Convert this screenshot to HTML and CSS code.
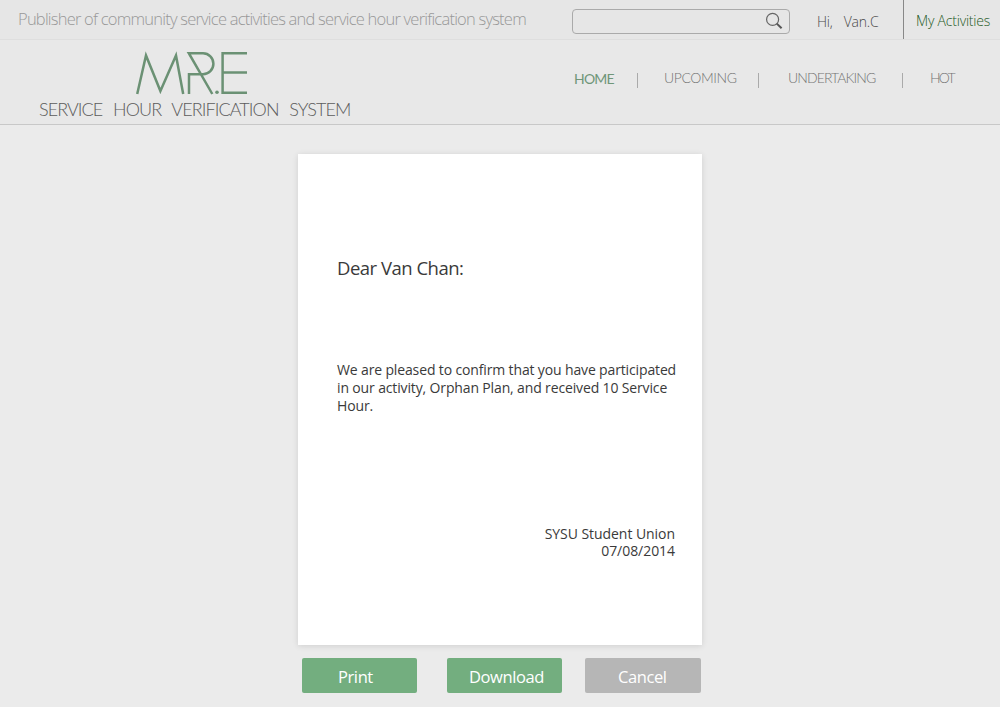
FILE: index.html
```html
<!DOCTYPE html>
<html lang="en">
<head>
  <meta charset="UTF-8">
  <title>MR.E - Service Hour Verification System</title>
  <link rel="stylesheet" href="styles.css">
</head>
<body>

  <!-- Top bar -->
  <div class="topbar">
    <div class="slogan">Publisher of community service activities and service hour verification system</div>
    <div class="search">
      <svg class="search-icon" width="18" height="18" viewBox="0 0 18 18">
        <circle cx="7.6" cy="7.4" r="6" fill="none" stroke="#666" stroke-width="1.2"/>
        <path d="M11.8 11.6L16.6 16.2" stroke="#555" stroke-width="2"/>
      </svg>
    </div>
    <div class="user"><span>Hi,</span><span>Van.C</span></div>
    <a class="my-activities">My Activities</a>
  </div>

  <!-- Logo and navigation -->
  <div class="header">
    <div class="brand">
      <svg class="logo" width="112" height="44" viewBox="136 51 112 44">
        <g fill="none" stroke="#6b9174" stroke-width="2.5">
          <path d="M137.2 94L146 55.5L160.4 91L176 55.5L183.2 94"/>
          <path d="M189 94V74.2H203A10.4 10.5 0 0 0 203 53.2H188.8L212.3 94"/>
          <path d="M247 53.2H222.6V92.8H247M222.6 72.6H247"/>
        </g>
        <circle cx="217" cy="92.2" r="1.8" fill="#6b9174"/>
      </svg>
      <div class="tagline">SERVICE HOUR VERIFICATION SYSTEM</div>
    </div>
    <div class="nav">
      <a class="nav-home">HOME</a>
      <i></i>
      <a class="nav-upcoming">UPCOMING</a>
      <i></i>
      <a class="nav-undertaking">UNDERTAKING</a>
      <i></i>
      <a class="nav-hot">HOT</a>
    </div>
  </div>

  <!-- Certificate -->
  <div class="letter">
    <div class="greeting">Dear Van Chan:</div>
    <div class="message">
      We are pleased to confirm that you have participated<br>
      in our activity, Orphan Plan, and received 10 Service<br>
      Hour.
    </div>
    <div class="signature">
      <div>SYSU Student Union</div>
      <div class="date">07/08/2014</div>
    </div>
  </div>

  <div class="buttons">
    <a class="btn print">Print</a>
    <a class="btn download">Download</a>
    <a class="btn cancel">Cancel</a>
  </div>

</body>
</html>
```
FILE: styles.css
```css
* {
  box-sizing: border-box;
}

body {
  margin: 0;
  height: 707px;
  overflow: hidden;
  background-color: #ebebeb;
  color: #3a3a3a;
  font-family: "Open Sans", "Noto Sans", sans-serif;
  white-space: nowrap;
}

/* Top bar */
.topbar {
  display: flex;
  height: 40px;
  background-color: #e6e6e6;
  border-bottom: 1px solid #dedede;
}

.slogan {
  width: 572px;
  padding-left: 18px;
  color: #989898;
  font-size: 16.5px;
  font-weight: 300;
  line-height: 37px;
  letter-spacing: -0.775px;
}

.search {
  display: flex;
  justify-content: flex-end;
  width: 218px;
  height: 25px;
  margin-top: 9px;
  padding: 2px 6px 0 0;
  border: 1px solid #aaa;
  border-radius: 4px;
}

.user {
  display: flex;
  gap: 11px;
  width: 113px;
  padding-left: 27px;
  color: #4a4a4a;
  font-size: 14px;
  font-weight: 300;
  line-height: 43px;
  letter-spacing: -0.2px;
}

.my-activities {
  padding-left: 12px;
  border-left: 1px solid #888;
  color: #1f5a1f;
  font-size: 14px;
  font-weight: 300;
  line-height: 41px;
  letter-spacing: -0.2px;
}

/* Logo and navigation */
.header {
  display: flex;
  height: 85px;
  background-color: #e8e8e8;
  border-bottom: 1px solid #c8c8c8;
}

.brand {
  width: 574px;
  padding: 11px 0 0 39px;
}

.logo {
  display: block;
  margin-left: 97px;
}

.tagline {
  color: #5c5c5c;
  font-family: Lato, sans-serif;
  font-size: 18px;
  font-weight: 300;
  line-height: 28px;
  letter-spacing: -0.93px;
  word-spacing: 6.8px;
}

.nav {
  display: flex;
  color: #747474;
  font-family: Lato, sans-serif;
  font-size: 14px;
  font-weight: 300;
  line-height: 76px;
}

.nav i {
  width: 1px;
  height: 15px;
  margin-top: 33px;
  background-color: #aaa;
}

.nav-home {
  width: 63px;
  color: #6f9678;
  font-weight: 400;
  line-height: 78px;
  letter-spacing: -0.8px;
}

.nav-upcoming {
  width: 120px;
  padding-left: 26px;
  letter-spacing: -0.4px;
}

.nav-undertaking {
  width: 143px;
  padding-left: 29px;
  letter-spacing: -0.9px;
}

.nav-hot {
  padding-left: 27px;
  letter-spacing: -1.8px;
}

/* Certificate */
.letter {
  width: 404px;
  height: 491px;
  margin: 29px auto 0 298px;
  padding: 102px 27px 0 39px;
  background-color: #fff;
  box-shadow: 0 1px 6px rgba(0, 0, 0, 0.12);
}

.greeting {
  font-size: 18.5px;
  line-height: 23px;
  letter-spacing: -0.5px;
}

.message {
  margin-top: 82px;
  font-size: 14px;
  line-height: 18px;
  letter-spacing: -0.14px;
}

.signature {
  margin-top: 110px;
  font-size: 14px;
  line-height: 17px;
  letter-spacing: -0.05px;
  text-align: right;
}

/* Buttons */
.buttons {
  display: flex;
  margin: 13px 0 0 302px;
}

.btn {
  width: 115px;
  height: 35px;
  border-radius: 2px;
  background-color: #73ae7f;
  color: #fff;
  font-size: 16.5px;
  line-height: 38px;
  letter-spacing: -0.4px;
}

.print {
  padding-left: 36px;
}

.download {
  margin-left: 30px;
  padding-left: 22px;
}

.cancel {
  width: 116px;
  margin-left: 23px;
  padding-left: 33px;
  background-color: #b6b6b6;
}
```
